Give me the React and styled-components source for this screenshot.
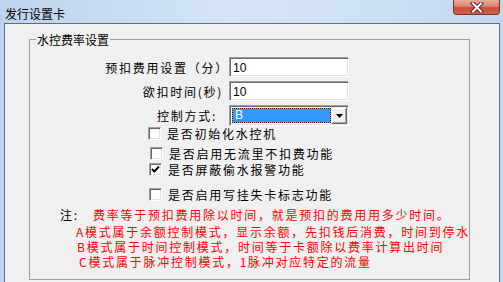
import React from 'react';
import styled, { createGlobalStyle } from 'styled-components';

const FONT = `"Noto Sans CJK SC", "Noto Sans", sans-serif`;

const Global = createGlobalStyle`
  html, body { margin: 0; padding: 0; background: #f0f0f0; }
  body { font-family: ${FONT}; }
`;

const Window = styled.div`
  width: 503px;
  height: 282px;
  overflow: hidden;
  display: flex;
  flex-direction: column;
  background: #bcd6f1;
`;

const TitleBar = styled.div`
  height: 23px;
  flex: none;
  display: flex;
  align-items: flex-start;
  justify-content: space-between;
  background: linear-gradient(to right, #bdd3eb 0%, #c9ddf2 25%, #d3e4f6 45%, #cfe1f4 70%, #c2d8ef 100%);
`;

const Title = styled.div`
  font: 12px/13px ${FONT};
  color: #000;
  margin: 7px 0 0 5px;
`;

const CloseButton = styled.div`
  width: 47px;
  height: 15px;
  margin-right: 3px;
  box-sizing: border-box;
  border: 1px solid #7b3428;
  border-top: none;
  border-radius: 0 0 4px 4px;
  background: linear-gradient(#e8ab9c 0%, #dc8570 45%, #c94c34 55%, #d0654a 100%);
  display: flex;
  align-items: center;
  justify-content: center;
`;

const Body = styled.div`
  flex: 1;
  display: flex;
`;

const FrameSide = styled.div`
  width: ${p => p.$w}px;
  flex: none;
  background: #bcd6f1;
`;

const Client = styled.div`
  flex: 1;
  background: #f0f0f0;
  border: 1px solid #58708d;
  border-bottom: none;
  min-width: 0;
`;

const GroupBox = styled.fieldset`
  box-sizing: border-box;
  width: 441px;
  margin: 9px 0 0 24px;
  padding: 0 0 10px 0;
  border: 1px solid #a0a0a0;
  min-width: 0;
  display: flex;
  flex-direction: column;
`;

const Legend = styled.legend`
  font: 12px/13px ${FONT};
  color: #000;
  padding: 0 1px;
  margin-left: 6px;
`;

const FieldRow = styled.div`
  display: flex;
  align-items: center;
  height: ${p => p.$h}px;
  margin-top: ${p => p.$mt}px;
`;

const Label = styled.div`
  width: 199px;
  box-sizing: border-box;
  text-align: right;
  padding-right: ${p => p.$pr}px;
  font: 12px/15px ${FONT};
  letter-spacing: 1.75px;
  color: #000;
  white-space: nowrap;
`;

const sunken = `
  box-sizing: border-box;
  border: 1px solid;
  border-color: #a0a0a0 #ffffff #ffffff #a0a0a0;
  box-shadow: inset 1px 1px 0 #696969, inset -1px -1px 0 #e3e3e3;
`;

const TextBox = styled.input`
  ${sunken}
  width: 120px;
  height: 20px;
  margin: 0;
  padding: 1px 0 0 3px;
  background: #fff;
  font: 12px/16px "Liberation Sans", sans-serif;
  color: #000;
  outline: none;
`;

const Combo = styled.div`
  ${sunken}
  width: 120px;
  height: 21px;
  padding: 1px;
  background: #fff;
  display: flex;
`;

const Selection = styled.div`
  width: 99px;
  margin: 1px 0 1px 1px;
  box-sizing: border-box;
  background: #3399ff;
  border: 1px solid #e59a2c;
  outline: 1px dotted #1a1a1a;
  outline-offset: -1px;
  color: #fff;
  font: 12px/13px "Liberation Sans", sans-serif;
  padding-left: 2px;
`;

const ArrowButton = styled.div`
  width: 16px;
  box-sizing: border-box;
  background: #f0f0f0;
  border: 1px solid;
  border-color: #f0f0f0 #696969 #696969 #f0f0f0;
  box-shadow: inset 1px 1px 0 #fff, inset -1px -1px 0 #a0a0a0;
  display: flex;
  align-items: center;
  justify-content: center;
`;

const CheckRow = styled.div`
  display: flex;
  align-items: center;
  height: 15px;
  margin-top: ${p => p.$mt}px;
  margin-left: ${p => p.$ml}px;
  gap: 6px;
`;

const CheckBox = styled.span`
  ${sunken}
  width: 13px;
  height: 13px;
  background: #fff;
  display: flex;
  align-items: center;
  justify-content: center;
`;

const CheckText = styled.span`
  font: 12px/15px ${FONT};
  letter-spacing: 1.75px;
  color: #000;
  white-space: nowrap;
`;

const NoteRow = styled.div`
  display: flex;
  margin-top: ${p => p.$mt}px;
  margin-left: ${p => p.$ml}px;
  overflow: hidden;
  white-space: nowrap;
`;

const NoteLabel = styled.span`
  width: 33px;
  flex: none;
  font: 12px/15px ${FONT};
  letter-spacing: 1.75px;
  color: #000;
`;

const RedText = styled.span`
  font: 12px/15px ${FONT};
  letter-spacing: 1.75px;
  color: #ff0000;
`;

const Check = ({ checked, text, mt, ml }) => (
  <CheckRow $mt={mt} $ml={ml}>
    <CheckBox>
      {checked && (
        <svg width="9" height="9" viewBox="0 0 9 9">
          <path d="M1 4 L3.3 6.5 L8 1.5" fill="none" stroke="#000" strokeWidth="1.9" />
        </svg>
      )}
    </CheckBox>
    <CheckText>{text}</CheckText>
  </CheckRow>
);

export default function App() {
  return (
    <>
      <Global />
      <Window>
        <TitleBar>
          <Title>发行设置卡</Title>
          <CloseButton>
            <svg width="16" height="11" viewBox="0 0 16 11">
              <path d="M4 1.5 L12 9.5 M12 1.5 L4 9.5" stroke="#5a2a22" strokeWidth="4" strokeLinecap="square" />
              <path d="M4 1.5 L12 9.5 M12 1.5 L4 9.5" stroke="#ffffff" strokeWidth="2" strokeLinecap="square" />
            </svg>
          </CloseButton>
        </TitleBar>
        <Body>
          <FrameSide $w={4} />
          <Client>
            <GroupBox>
              <Legend>水控费率设置</Legend>
              <FieldRow $h={20} $mt={11}>
                <Label $pr={0}>预扣费用设置（分）</Label>
                <TextBox readOnly value="10" />
              </FieldRow>
              <FieldRow $h={20} $mt={4}>
                <Label $pr={6}>欲扣时间(秒)</Label>
                <TextBox readOnly value="10" />
              </FieldRow>
              <FieldRow $h={21} $mt={4}>
                <Label $pr={12}>控制方式:</Label>
                <Combo>
                  <Selection>B</Selection>
                  <ArrowButton>
                    <svg width="7" height="4" viewBox="0 0 7 4">
                      <path d="M0 0 H7 L3.5 4 Z" fill="#000" />
                    </svg>
                  </ArrowButton>
                </Combo>
              </FieldRow>
              <Check mt={0} ml={118} text="是否初始化水控机" />
              <Check mt={5} ml={120} text="是否启用无流里不扣费功能" />
              <Check mt={1} ml={119} checked text="是否屏蔽偷水报警功能" />
              <Check mt={10} ml={119} text="是否启用写挂失卡标志功能" />
              <NoteRow $mt={5} $ml={30}>
                <NoteLabel>注:</NoteLabel>
                <RedText>费率等于预扣费用除以时间，就是预扣的费用用多少时间。</RedText>
              </NoteRow>
              <NoteRow $mt={2} $ml={46}>
                <RedText>A模式属于余额控制模式，显示余额，先扣钱后消费，时间到停水</RedText>
              </NoteRow>
              <NoteRow $mt={0} $ml={47}>
                <RedText>B模式属于时间控制模式，时间等于卡额除以费率计算出时间</RedText>
              </NoteRow>
              <NoteRow $mt={0} $ml={49}>
                <RedText>C模式属于脉冲控制模式，1脉冲对应特定的流量</RedText>
              </NoteRow>
            </GroupBox>
          </Client>
          <FrameSide $w={3} />
        </Body>
      </Window>
    </>
  );
}
